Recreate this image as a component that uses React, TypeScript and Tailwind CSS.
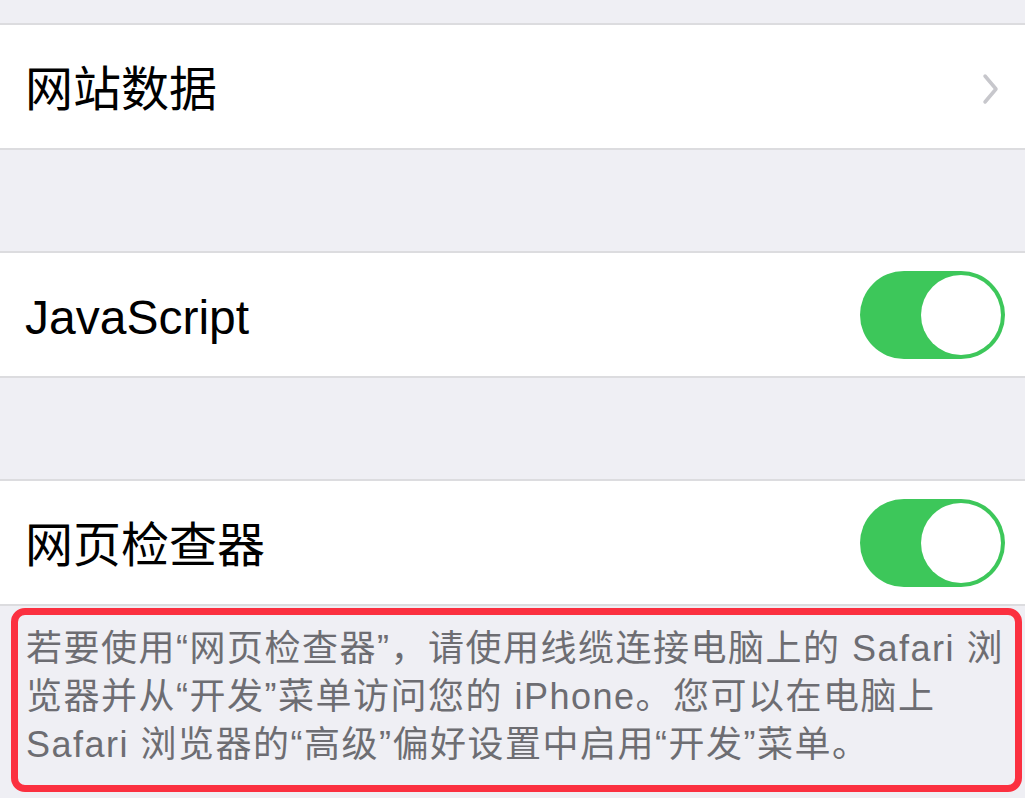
import React from "react";

function Toggle() {
  return (
    <div className="w-[145px] h-[88px] rounded-full bg-[#3dc75a] flex items-center justify-end pr-[4px]">
      <div className="w-[80px] h-[80px] rounded-full bg-white" />
    </div>
  );
}

function Chevron() {
  return (
    <svg width="20" height="34" viewBox="0 0 20 34" className="mr-[4px] mt-[4px]">
      <path d="M4 4 L15 17 L4 30" fill="none" stroke="#c7c7cc" strokeWidth="3.5" strokeLinecap="round" strokeLinejoin="round" />
    </svg>
  );
}

function Row({ label, right }: { label: string; right: React.ReactNode }) {
  return (
    <div className="h-[127px] bg-white border-y-2 border-[#dcdcdf] flex items-center justify-between pl-[25px] pr-[20px]">
      <span className="text-[48px] text-black pt-[6px]">{label}</span>
      {right}
    </div>
  );
}

export default function App() {
  return (
    <div
      className="w-[1025px] h-[798px] bg-[#efeff4] overflow-hidden"
      style={{ fontFamily: '"Liberation Sans", "Noto Sans CJK SC", sans-serif' }}
    >
      <div className="h-[23px]" />
      <Row label="网站数据" right={<Chevron />} />
      <div className="h-[101px]" />
      <Row label="JavaScript" right={<Toggle />} />
      <div className="h-[101px]" />
      <Row label="网页检查器" right={<Toggle />} />
      <div className="pt-[2px] pl-[11px] pr-[3px]">
        <div className="h-[184px] border-[7px] border-[#fb3040] rounded-[14px] pl-[8px] pt-[10px]">
          <p className="text-[36px] leading-[48px] tracking-[1.5px] text-[#6d6d72] whitespace-nowrap">
            若要使用“网页检查器”，请使用线缆连接电脑上的 Safari 浏
            <br />
            览器并从“开发”菜单访问您的 iPhone。您可以在电脑上
            <br />
            Safari 浏览器的“高级”偏好设置中启用“开发”菜单。
          </p>
        </div>
      </div>
    </div>
  );
}
